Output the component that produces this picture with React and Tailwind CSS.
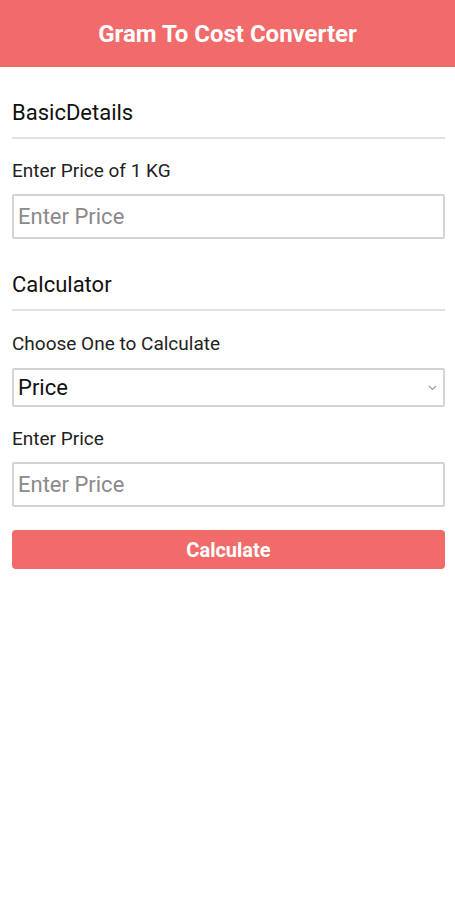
import React, { useState } from "react";

function SectionTitle({ children, className = "" }) {
  return (
    <div className={className}>
      <h2 className="text-[22px] leading-[24px] text-[#111]">{children}</h2>
      <div className="mt-[12px] h-[2px] bg-[#e3e3e3]" />
    </div>
  );
}

function Label({ children, className = "" }) {
  return (
    <label className={`block text-[19px] leading-[20px] text-[#222] ${className}`}>
      {children}
    </label>
  );
}

export default function App() {
  const [kgPrice, setKgPrice] = useState("");
  const [mode, setMode] = useState("price");
  const [value, setValue] = useState("");

  return (
    <div className="min-h-[900px] bg-white font-['Roboto',sans-serif]">
      <header className="h-[67px] bg-[#f26b6b] flex items-center justify-center">
        <h1 className="text-white text-[24px] font-bold">Gram To Cost Converter</h1>
      </header>

      <main className="pl-[12px] pr-[10px]">
        <SectionTitle className="pt-[34px]">BasicDetails</SectionTitle>

        <Label className="mt-[22px]">Enter Price of 1 KG</Label>
        <input
          type="number"
          value={kgPrice}
          onChange={(e) => setKgPrice(e.target.value)}
          placeholder="Enter Price"
          className="mt-[13px] block w-full h-[45px] px-[4px] border-2 border-[#d4d4d4] rounded-[2px] text-[22px] text-[#111] placeholder:text-[#8a8a8a] outline-none"
        />

        <SectionTitle className="mt-[34px]">Calculator</SectionTitle>

        <Label className="mt-[23px]">Choose One to Calculate</Label>
        <div className="relative mt-[14px]">
          <select
            value={mode}
            onChange={(e) => setMode(e.target.value)}
            className="block w-full h-[39px] pl-[4px] pr-[24px] appearance-none bg-white border-2 border-[#d4d4d4] rounded-[2px] text-[22px] text-[#111] outline-none"
          >
            <option value="price">Price</option>
            <option value="gram">Gram</option>
          </select>
          <svg
            className="pointer-events-none absolute right-[8px] top-1/2 -translate-y-1/2"
            width="9"
            height="6"
            viewBox="0 0 9 6"
            fill="none"
          >
            <path d="M1 1l3.5 3.5L8 1" stroke="#9a9a9a" strokeWidth="1.2" />
          </svg>
        </div>

        <Label className="mt-[22px]">Enter Price</Label>
        <input
          type="number"
          value={value}
          onChange={(e) => setValue(e.target.value)}
          placeholder="Enter Price"
          className="mt-[13px] block w-full h-[45px] px-[4px] border-2 border-[#d4d4d4] rounded-[2px] text-[22px] text-[#111] placeholder:text-[#8a8a8a] outline-none"
        />

        <button className="mt-[23px] w-full h-[39px] bg-[#f26b6b] rounded-[4px] text-white text-[20px] font-bold">
          Calculate
        </button>
      </main>
    </div>
  );
}
